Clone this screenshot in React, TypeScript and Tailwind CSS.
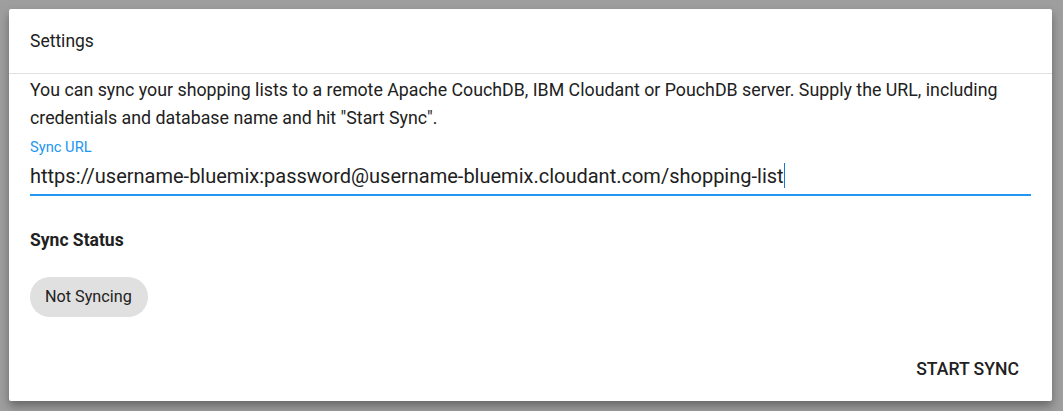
import React from 'react';

const syncUrl = 'https://username-bluemix:password@username-bluemix.cloudant.com/shopping-list';

const SettingsDialog: React.FC = () => {
  return (
    <div className="flex h-[392px] w-[1043px] flex-col rounded-[2px] bg-white shadow-[0_5px_10px_rgba(0,0,0,0.35)]">
      <div className="flex h-[64px] items-center px-[21px] pt-[1px] text-[17.5px] text-[#212121]">Settings</div>
      <div className="h-px bg-[#e0e0e0]" />

      <div className="flex flex-1 flex-col px-[21px] pt-[2px]">
        <p className="text-[17.8px] leading-[28px] text-[#212121]">
          You can sync your shopping lists to a remote Apache CouchDB, IBM Cloudant or PouchDB server. Supply the URL, including
          credentials and database name and hit &quot;Start Sync&quot;.
        </p>

        <label className="mt-[7px] text-[14.7px] leading-[16px] text-[#2196f3]">Sync URL</label>
        <div className="mt-[8px] flex items-center border-b-2 border-[#2196f3] pb-[6px] text-[20px] leading-[24px] text-[#212121]">
          <span>{syncUrl}</span>
          <span className="h-[25px] w-px bg-[#1976d2]" />
        </div>

        <h3 className="mt-[32px] text-[17.5px] font-bold leading-[24px] text-[#212121]">Sync Status</h3>

        <div className="mt-[25px] flex">
          <span className="flex h-[40px] items-center rounded-full bg-[#e0e0e0] pl-[15px] pr-[16px] text-[16.2px] text-[#212121]">
            Not Syncing
          </span>
        </div>

        <div className="mt-auto flex justify-end pb-[22px] pr-[12px]">
          <button className="text-[17.6px] font-medium leading-[20px] text-[#212121]">START SYNC</button>
        </div>
      </div>
    </div>
  );
};

const App: React.FC = () => {
  return (
    <div className="h-[411px] w-[1063px] bg-[#9e9e9e] p-[9px] font-['Roboto',sans-serif]">
      <SettingsDialog />
    </div>
  );
};

export default App;
